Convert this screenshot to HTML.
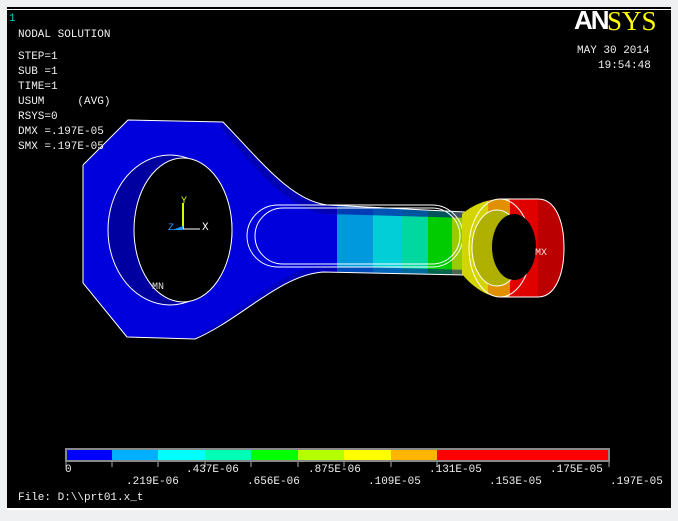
<!DOCTYPE html>
<html><head><style>
body{margin:0;width:678px;height:521px;background:#eef0f2;overflow:hidden;position:relative;font-family:"Liberation Mono","DejaVu Sans Mono",monospace;}
#bk{position:absolute;left:7px;top:7px;width:664px;height:503px;background:#000;}
.t{position:absolute;color:#f0f0f0;font-size:11px;line-height:15px;white-space:pre;}
</style></head><body>
<div id="bk"></div>
<div style="position:absolute;left:7px;top:9px;width:664px;height:1px;background:#fff"></div>
<div style="position:absolute;left:7px;top:508px;width:664px;height:2px;background:#fff"></div>
<svg width="678" height="521" style="position:absolute;left:0;top:0">
<defs>
<clipPath id="rod"><path d="M128,120 L223,122 C260,160 290,200 327,205 L470,212 L470,275 L323,272 C280,275 240,320 195,339 L127,337 L83,283 L83,165 Z"/></clipPath>
<clipPath id="se"><path d="M462,214 C475,203 490,199 500,199 L538,199 C555,199 564,220 564,248 C564,275 555,297 538,297 L500,297 C490,297 475,290 462,274 Z"/></clipPath>
</defs>
<g clip-path="url(#rod)">
<rect x="80" y="110" width="260" height="240" fill="#0000dd"/>
<rect x="337" y="110" width="36" height="240" fill="#0099dd"/>
<rect x="373" y="110" width="29" height="240" fill="#00cfd8"/>
<rect x="402" y="110" width="26" height="240" fill="#00d8a0"/>
<rect x="428" y="110" width="24" height="240" fill="#00cc00"/>
<rect x="452" y="110" width="20" height="240" fill="#99cc00"/>
<path d="M223,122 C260,160 290,200 327,205 L470,212 L470,218 L327,214 C290,210 255,170 220,126Z" fill="#000099" opacity=".6"/>
<path d="M195,339 C240,320 280,275 323,272 L470,275 L470,270 L323,266 C280,268 240,315 190,339Z" fill="#000099" opacity=".5"/>
</g>
<path d="M83,165 L128,120 L223,122 C260,160 290,200 327,205 L465,212" fill="none" stroke="#fff"/>
<path d="M465,275 L323,272 C280,275 240,320 195,339 L127,337 L83,283 L83,165" fill="none" stroke="#fff"/>
<ellipse cx="170" cy="230" rx="62" ry="75" fill="#0000a0" stroke="#fff"/>
<ellipse cx="183" cy="230" rx="49" ry="72" fill="#000" stroke="#fff"/>
<rect x="247" y="205" width="216" height="62" rx="31" fill="none" stroke="#fff"/>
<rect x="255" y="208" width="205" height="56" rx="28" fill="none" stroke="#fff"/>
<!-- small end -->
<g clip-path="url(#se)">
<rect x="460" y="195" width="28" height="105" fill="#d4d400"/>
<rect x="488" y="195" width="22" height="105" fill="#e09000"/>
<rect x="510" y="195" width="60" height="105" fill="#e00000"/>
<ellipse cx="538" cy="248" rx="26" ry="49" fill="#bb0000"/>
<rect x="510" y="195" width="28" height="105" fill="#e00000"/>
</g>
<ellipse cx="500" cy="248" rx="31" ry="49" fill="none" stroke="#fff"/>
<ellipse cx="497" cy="248" rx="25" ry="38" fill="#b0b000" stroke="#fff"/>
<ellipse cx="514" cy="247" rx="22" ry="33" fill="#000"/>
<path d="M500,199 L538,199 C555,199 564,220 564,248 C564,275 555,297 538,297 L500,297" fill="none" stroke="#fff"/>
<!-- triad -->
<line x1="183" y1="203" x2="183" y2="229" stroke="#ccff00" stroke-width="2"/>
<line x1="183" y1="229" x2="200" y2="229" stroke="#fff"/>
<path d="M172,230 L183,226 L183,230Z" fill="#2299ff"/>
<text x="181" y="203" fill="#ccff00" font-size="10" font-family="Liberation Mono">Y</text>
<text x="202" y="230" fill="#fff" font-size="11" font-family="Liberation Mono">X</text>
<text x="168" y="230" fill="#2299ff" font-size="10" font-family="Liberation Mono">Z</text>
<text x="152" y="289" fill="#ddd" font-size="10" font-family="Liberation Mono">MN</text>
<text x="535" y="255" fill="#fdd" font-size="10" font-family="Liberation Mono">MX</text>
<!-- legend -->
<rect x="65" y="448" width="545" height="14" fill="#888"/>
<rect x="67" y="450" width="45" height="10" fill="#0000ff"/>
<rect x="112" y="450" width="46" height="10" fill="#00b0ff"/>
<rect x="158" y="450" width="47" height="10" fill="#00ffff"/>
<rect x="205" y="450" width="46" height="10" fill="#00ffb4"/>
<rect x="251" y="450" width="47" height="10" fill="#00ff00"/>
<rect x="298" y="450" width="46" height="10" fill="#b4ff00"/>
<rect x="344" y="450" width="47" height="10" fill="#ffff00"/>
<rect x="391" y="450" width="46" height="10" fill="#ffb400"/>
<rect x="437" y="450" width="171" height="10" fill="#ff0000"/>
<g stroke="#aaa"><line x1="66" y1="462" x2="66" y2="467"/><line x1="112" y1="462" x2="112" y2="467"/><line x1="158" y1="462" x2="158" y2="467"/><line x1="205" y1="462" x2="205" y2="467"/><line x1="251" y1="462" x2="251" y2="467"/><line x1="298" y1="462" x2="298" y2="467"/><line x1="344" y1="462" x2="344" y2="467"/><line x1="391" y1="462" x2="391" y2="467"/><line x1="437" y1="462" x2="437" y2="467"/><line x1="609" y1="462" x2="609" y2="467"/></g>
<text x="574" y="29" fill="#fff" font-size="26" font-weight="bold" font-family="Liberation Sans" letter-spacing="-2">AN</text>
<text x="607" y="30" fill="#ffff00" font-size="27" font-family="Liberation Serif">SYS</text>
</svg>
<div class="t" style="left:9px;top:12px;color:#00cccc">1</div>
<div class="t" style="left:18px;top:28px">NODAL SOLUTION</div>
<div class="t" style="left:18px;top:50px">STEP=1
SUB =1
TIME=1
USUM     (AVG)
RSYS=0
DMX =.197E-05
SMX =.197E-05</div>
<div class="t" style="left:577px;top:44px">MAY 30 2014</div>
<div class="t" style="left:598px;top:59px">19:54:48</div>
<div class="t" style="left:65px;top:463px">0</div>
<div class="t" style="left:186px;top:463px">.437E-06</div>
<div class="t" style="left:308px;top:463px">.875E-06</div>
<div class="t" style="left:429px;top:463px">.131E-05</div>
<div class="t" style="left:550px;top:463px">.175E-05</div>
<div class="t" style="left:126px;top:475px">.219E-06</div>
<div class="t" style="left:247px;top:475px">.656E-06</div>
<div class="t" style="left:368px;top:475px">.109E-05</div>
<div class="t" style="left:489px;top:475px">.153E-05</div>
<div class="t" style="left:610px;top:475px">.197E-05</div>
<div class="t" style="left:18px;top:491px">File: D:\\prt01.x_t</div>
</body></html>
